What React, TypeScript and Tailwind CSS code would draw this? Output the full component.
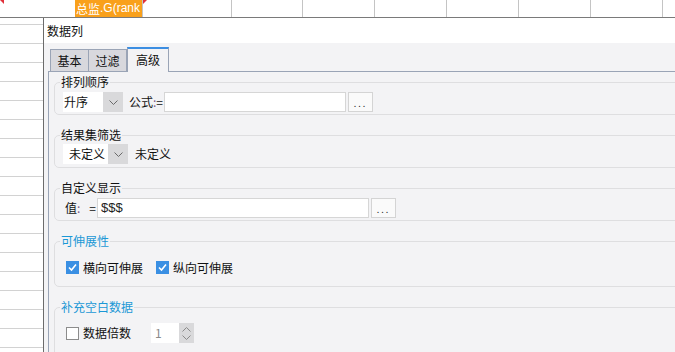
import React from "react";

function Chevron() {
  return (
    <svg width="9" height="5" viewBox="0 0 9 5">
      <path d="M0.5 0.5 L4.5 4.5 L8.5 0.5" fill="none" stroke="#6a6a6a" strokeWidth="1" />
    </svg>
  );
}

function CheckOn() {
  return (
    <span className="flex h-[13px] w-[13px] shrink-0 items-center justify-center bg-[#3a8fe3]">
      <svg width="11" height="11" viewBox="0 0 11 11">
        <path d="M2 5.5 L4.5 8 L9 2.5" fill="none" stroke="#ffffff" strokeWidth="1.6" />
      </svg>
    </span>
  );
}

function Legend({ children, blue }: { children: React.ReactNode; blue?: boolean }) {
  return (
    <legend className={"ml-[5px] px-[1px] text-[12px] leading-[16px] " + (blue ? "text-[#1b98d6]" : "text-[#111]")}>
      {children}
    </legend>
  );
}

function Dots() {
  return (
    <div className="ml-[2px] flex h-[20px] w-[25px] shrink-0 items-end justify-center border border-[#d4d4d4] bg-[#fafafa] pb-[3px] text-[9px] leading-[9px] tracking-[2px] text-[#333]">
      ...
    </div>
  );
}

export default function App() {
  const rows = Array.from({ length: 17 });
  return (
    <div className="h-[352px] w-[675px] overflow-hidden bg-white font-['Noto_Sans_CJK_SC','Noto_Sans',sans-serif] text-[#111]">
      {/* spreadsheet header row */}
      <div className="relative flex h-[18px] border-b border-[#7a7a7a]">
        <div className="w-[75px] shrink-0" />
        <div className="flex h-[17px] w-[68px] shrink-0 items-center overflow-hidden whitespace-nowrap border-r border-[#c4c4c4] bg-[#f9a01b] pl-[1px] text-[12px] leading-[15px] text-white">
          <span>总监</span>
          <span className="font-['Liberation_Sans',sans-serif]">.G(rank</span>
        </div>
        <div className="w-[89px] shrink-0 border-r border-[#c4c4c4]" />
        <div className="w-[71px] shrink-0 border-r border-[#c4c4c4]" />
        <div className="w-[72px] shrink-0 border-r border-[#c4c4c4]" />
        <div className="w-[72px] shrink-0 border-r border-[#c4c4c4]" />
        <div className="w-[72px] shrink-0 border-r border-[#c4c4c4]" />
        <div className="w-[72px] shrink-0 border-r border-[#c4c4c4]" />
        <div className="w-[72px] shrink-0 border-r border-[#c4c4c4]" />
        <div className="w-[72px] shrink-0" />
        <span className="absolute left-0 top-0 h-0 w-0 border-l-[4px] border-t-[4px] border-l-transparent border-t-[#e0303a]" />
        <span className="absolute left-[143px] top-0 h-0 w-0 border-r-[4px] border-t-[4px] border-r-transparent border-t-[#e0303a]" />
      </div>

      <div className="flex">
        {/* left spreadsheet column */}
        <div className="w-[43px] shrink-0">
          <div className="h-[7px] border-b border-[#d2d2d2]" />
          {rows.map((_, i) => (
            <div key={i} className="h-[19px] border-b border-[#d2d2d2]" />
          ))}
        </div>

        {/* dialog */}
        <div className="w-[660px] shrink-0 border-l border-[#6b6b6b]">
          <div className="h-[25px] bg-white pl-[3px] text-[12px] leading-[25px]">数据列</div>
          <div className="h-[320px] bg-[#f3f3f5] pl-[4px] pt-[4px]">
            {/* tabs */}
            <div className="flex h-[24px] items-end pl-[2px] text-[12px]">
              <div className="flex h-[22px] w-[39px] items-center justify-center border border-b-0 border-[#9aa4b6] bg-[#d8d8dd]">基本</div>
              <div className="flex h-[22px] w-[38px] items-center justify-center border border-b-0 border-l-0 border-[#9aa4b6] bg-[#d8d8dd]">过滤</div>
              <div className="relative z-10 -mb-px flex h-[25px] w-[42px] items-center justify-center border-x border-t-2 border-x-[#9aa4b6] border-t-[#3c8ee2] bg-[#f3f3f5] pb-[2px]">高级</div>
            </div>

            {/* panel */}
            <div className="h-[300px] border-l border-t border-[#9aa4b6] pl-[5px] pt-[2px]">
              {/* 排列顺序 */}
              <fieldset className="rounded-[5px] border border-[#dedee0]">
                <Legend>排列顺序</Legend>
                <div className="mb-[2px] mt-[2px] flex h-[20px] items-center pl-[8px] text-[12px]">
                  <div className="flex h-[20px] w-[60px] shrink-0">
                    <div className="w-[40px] bg-white pl-[1px] leading-[20px]">升序</div>
                    <div className="flex w-[20px] items-center justify-center bg-[#d9d9db]"><Chevron /></div>
                  </div>
                  <span className="ml-[6px]">公式</span>
                  <span className="text-[#7b5b8c]">:</span>
                  <span>=</span>
                  <div className="ml-[1px] h-[20px] w-[182px] shrink-0 border border-[#d6d6d6] bg-white" />
                  <Dots />
                </div>
              </fieldset>

              {/* 结果集筛选 */}
              <fieldset className="mt-[12px] rounded-[5px] border border-[#dedee0]">
                <Legend>结果集筛选</Legend>
                <div className="mb-[3px] mt-[1px] flex h-[20px] items-center pl-[8px] text-[12px]">
                  <div className="flex h-[20px] w-[65px] shrink-0">
                    <div className="w-[45px] bg-white pl-[6px] leading-[20px]">未定义</div>
                    <div className="flex w-[20px] items-center justify-center bg-[#d9d9db]"><Chevron /></div>
                  </div>
                  <span className="ml-[7px]">未定义</span>
                </div>
              </fieldset>

              {/* 自定义显示 */}
              <fieldset className="mt-[12px] rounded-[5px] border border-[#dedee0]">
                <Legend>自定义显示</Legend>
                <div className="mb-[2px] mt-[2px] flex h-[20px] items-center pl-[10px] text-[12px]">
                  <span>值</span>
                  <span className="text-[#7b5b8c]">:</span>
                  <span className="ml-[9px]">=</span>
                  <div className="ml-[1px] flex h-[20px] w-[272px] shrink-0 items-center border border-[#d6d6d6] bg-white pl-[3px] font-['Liberation_Sans',sans-serif] text-[13px] font-medium text-[#222]">
                    $$$
                  </div>
                  <Dots />
                </div>
              </fieldset>

              {/* 可伸展性 */}
              <fieldset className="mt-[12px] rounded-[5px] border border-[#dedee0]">
                <Legend blue>可伸展性</Legend>
                <div className="mb-[8px] mt-[8px] flex h-[21px] items-center pl-[11px] text-[12px]">
                  <CheckOn />
                  <span className="ml-[4px]">横向可伸展</span>
                  <span className="ml-[13px]"><CheckOn /></span>
                  <span className="ml-[4px]">纵向可伸展</span>
                </div>
              </fieldset>

              {/* 补充空白数据 */}
              <fieldset className="mt-[12px] h-[80px] rounded-[5px] border border-[#dedee0]">
                <Legend blue>补充空白数据</Legend>
                <div className="mt-[8px] flex h-[20px] items-center pl-[11px] text-[12px]">
                  <span className="h-[13px] w-[13px] shrink-0 border border-[#8c8c8c] bg-white" />
                  <span className="ml-[4px]">数据倍数</span>
                  <div className="ml-[20px] flex h-[20px] w-[43px] shrink-0">
                    <div className="w-[28px] bg-white pl-[4px] leading-[20px] text-[#8a8a8a]">1</div>
                    <div className="flex w-[15px] flex-col items-center justify-center gap-[3px] bg-[#d9d9db]">
                      <svg width="9" height="5" viewBox="0 0 9 5">
                        <path d="M0.5 4.5 L4.5 0.5 L8.5 4.5" fill="none" stroke="#8a8a8a" strokeWidth="1" />
                      </svg>
                      <svg width="9" height="5" viewBox="0 0 9 5">
                        <path d="M0.5 0.5 L4.5 4.5 L8.5 0.5" fill="none" stroke="#8a8a8a" strokeWidth="1" />
                      </svg>
                    </div>
                  </div>
                </div>
              </fieldset>
            </div>
          </div>
        </div>
      </div>
    </div>
  );
}
